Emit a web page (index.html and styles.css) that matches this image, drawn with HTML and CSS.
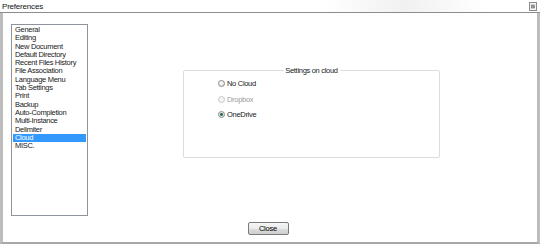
FILE: index.html
```html
<!DOCTYPE html>
<html lang="en">
<head>
<meta charset="UTF-8">
<title>Preferences</title>
<link rel="stylesheet" href="styles.css">
</head>
<body>

<div class="window">
	<div class="titlebar">
		<span class="title">Preferences</span>
		<svg class="close-icon" width="8" height="9" viewBox="0 0 8 9">
			<rect x="0.5" y="0.5" width="7" height="8" fill="#f4f4f4" stroke="#8a8a8a"></rect>
			<rect x="2.5" y="3" width="3" height="3" fill="#9a9a9a" stroke="#6e6e6e" stroke-width="0.6"></rect>
		</svg>
	</div>

	<div class="frame">
		<div class="main">
			<ul class="pref-list">
				<li>General</li>
				<li>Editing</li>
				<li>New Document</li>
				<li>Default Directory</li>
				<li>Recent Files History</li>
				<li>File Association</li>
				<li>Language Menu</li>
				<li>Tab Settings</li>
				<li>Print</li>
				<li>Backup</li>
				<li>Auto-Completion</li>
				<li>Multi-Instance</li>
				<li>Delimiter</li>
				<li class="selected">Cloud</li>
				<li>MISC.</li>
			</ul>

			<div class="group">
				<div class="group-title">Settings on cloud</div>
				<div class="group-body">
					<label class="radio-row"><span class="radio"></span>No Cloud</label>
					<label class="radio-row disabled"><span class="radio"></span>Dropbox</label>
					<label class="radio-row"><span class="radio checked"></span>OneDrive</label>
				</div>
			</div>
		</div>

		<div class="footer">
			<button class="btn">Close</button>
		</div>
	</div>
</div>

</body>
</html>
```

FILE: styles.css
```css
* {
	box-sizing: border-box;
}
body {
	margin: 0;
	background: #fff;
	font-family: "Liberation Sans", Arial, sans-serif;
	font-size: 7.5px;
	letter-spacing: -0.3px;
	color: #1a1a1a;
}

.window {
	width: 540px;
	height: 244px;
	display: flex;
	flex-direction: column;
}
.titlebar {
	height: 13px;
	border-bottom: 1px solid #8c8c8c;
	display: flex;
	justify-content: space-between;
	align-items: center;
	padding: 0 3px 0 2px;
	background: linear-gradient(to right, #fff 0%, #fff 60%, #f1f1f1 75%, #fff 90%);
}
.title {
	font-size: 8px;
	letter-spacing: -0.2px;
	color: #111;
}
.close-icon {
	display: block;
}

.frame {
	flex: 1;
	border-left: 3px solid #bdbdbd;
	border-right: 3px solid #bdbdbd;
	border-bottom: 2px solid #a8a8a8;
	display: flex;
	flex-direction: column;
}
.main {
	display: flex;
	align-items: flex-start;
	padding: 11px 0 0 8px;
}

.pref-list {
	flex: none;
	list-style: none;
	margin: 0;
	padding: 1px;
	width: 77px;
	height: 192px;
	border: 1px solid #8e949c;
	background: #fff;
}
.pref-list li {
	height: 8.3px;
	line-height: 8.3px;
	padding-left: 2px;
	white-space: nowrap;
}
.pref-list li.selected {
	background: #3399ff;
	color: #fff;
}

.group {
	flex: none;
	margin: 46px 0 0 95px;
	width: 257px;
	height: 88px;
	border: 1px solid #dcdcdc;
	border-radius: 2px;
	display: flex;
	flex-direction: column;
}
.group-title {
	align-self: center;
	margin-top: -5px;
	padding: 0 2px;
	line-height: 9px;
	background: #fff;
}
.group-body {
	padding: 1px 0 0 34px;
}
.radio-row {
	display: flex;
	align-items: center;
	gap: 2px;
	height: 15.5px;
}
.radio-row.disabled {
	color: #9a9a9a;
}
.radio {
	width: 7px;
	height: 7px;
	border-radius: 50%;
	border: 1px solid #8a8a8a;
	background: radial-gradient(circle at 40% 35%, #fff 0%, #e4e4e4 70%, #cfcfcf 100%);
}
.radio-row.disabled .radio {
	border-color: #c8c8c8;
	background: #f4f4f4;
}
.radio.checked {
	background: radial-gradient(circle, #1f5a3c 0%, #2f7a55 35%, #dedede 45%, #f4f4f4 100%);
}

.footer {
	display: flex;
	justify-content: center;
	padding: 6px 4px 0 0;
}
.btn {
	width: 41px;
	height: 13px;
	padding: 0;
	font-family: inherit;
	font-size: 7.5px;
	letter-spacing: -0.2px;
	color: #000;
	border: 1px solid #7a7a7a;
	border-radius: 2px;
	background: linear-gradient(to bottom, #f6f6f6 0%, #ebebeb 50%, #dddddd 51%, #cfcfcf 100%);
}
```
